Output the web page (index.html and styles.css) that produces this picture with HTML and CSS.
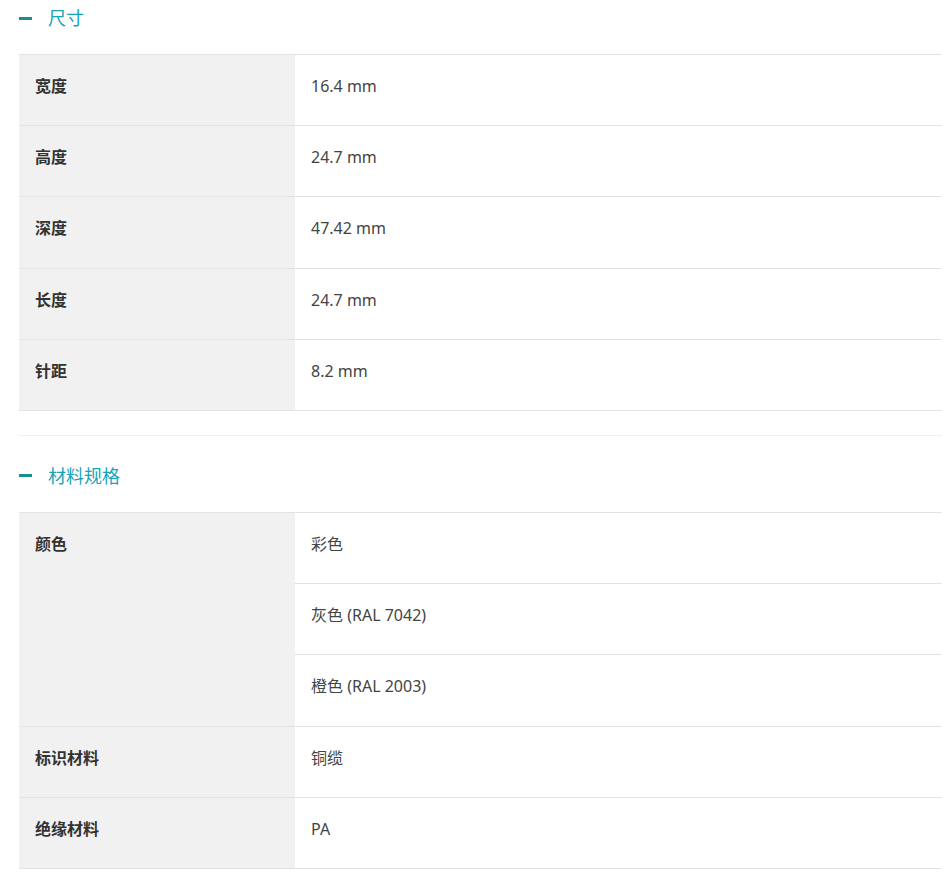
FILE: index.html
```html
<!DOCTYPE html>
<html lang="zh">
<head>
<meta charset="utf-8">
<link rel="stylesheet" href="styles.css">
</head>
<body>
<div class="page">
  <section class="sec first">
    <h2 class="head"><span class="minus"></span><span class="title">尺寸</span></h2>
    <table class="spec">
      <tr><th>宽度</th><td>16.4 mm</td></tr>
      <tr><th>高度</th><td>24.7 mm</td></tr>
      <tr><th>深度</th><td>47.42 mm</td></tr>
      <tr><th>长度</th><td>24.7 mm</td></tr>
      <tr><th>针距</th><td>8.2 mm</td></tr>
    </table>
  </section>
  <section class="sec">
    <h2 class="head"><span class="minus"></span><span class="title">材料规格</span></h2>
    <table class="spec">
      <tr><th rowspan="3">颜色</th><td>彩色</td></tr>
      <tr><td>灰色 (RAL 7042)</td></tr>
      <tr><td>橙色 (RAL 2003)</td></tr>
      <tr><th>标识材料</th><td>铜缆</td></tr>
      <tr><th>绝缘材料</th><td>PA</td></tr>
    </table>
  </section>
</div>
</body>
</html>
```

FILE: styles.css
```css
html, body {
  margin: 0;
  padding: 0;
  background: #fff;
}
body {
  font-family: "Noto Sans", "Noto Sans CJK SC", sans-serif;
  color: #333;
}
.page {
  margin: -23px 10px 0 19px;
}
.sec {
  border-top: 1px solid #f0f0f0;
  padding-bottom: 24px;
}
.head {
  margin: 0;
  padding: 28px 0 24px;
  display: flex;
  align-items: center;
  height: 24px;
  box-sizing: content-box;
  font-weight: normal;
}
.minus {
  width: 13px;
  height: 3px;
  background: #168f94;
  margin-right: 16px;
}
.title {
  font-size: 18px;
  line-height: 24px;
  color: #17a3b8;
}
.spec {
  width: 100%;
  border-collapse: collapse;
  font-size: 16px;
  line-height: 24px;
}
.spec th, .spec td {
  border-top: 1px solid #e3e3e3;
  border-bottom: 1px solid #e3e3e3;
  height: 71.2px;
  box-sizing: border-box;
  padding: 19px 16px 26px;
  vertical-align: top;
  text-align: left;
}
.spec th {
  width: 276px;
  background: #f1f1f1;
  font-weight: bold;
  color: #333;
}
.spec td {
  color: #444;
}
```
